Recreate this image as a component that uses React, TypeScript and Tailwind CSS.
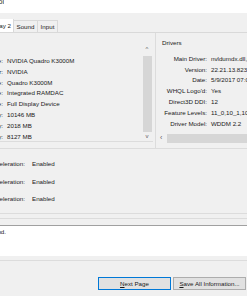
import React from 'react';

const deviceRows = [
  ['Name', 'NVIDIA Quadro K3000M'],
  ['Manufacturer', 'NVIDIA'],
  ['Chip Type', 'Quadro K3000M'],
  ['DAC Type', 'Integrated RAMDAC'],
  ['Device Type', 'Full Display Device'],
  ['Display Memory', '10146 MB'],
  ['Dedicated Memory', '2018 MB'],
  ['Shared Memory', '8127 MB'],
];

const driverRows = [
  ['Main Driver', 'nvldumdx.dll,nvldumdx.dll,nvldumdx.dll,nvldumdx.dll'],
  ['Version', '22.21.13.8233'],
  ['Date', '5/9/2017 07:00:00 PM'],
  ["WHQL Logo'd", 'Yes'],
  ['Direct3D DDI', '12'],
  ['Feature Levels', '11_0,10_1,10_0,9_3,9_2,9_1'],
  ['Driver Model', 'WDDM 2.2'],
];

const features = ['DirectDraw Acceleration', 'Direct3D Acceleration', 'AGP Texture Acceleration'];

export default function App() {
  return (
    <div className="flex h-[296px] w-[247px] flex-col overflow-hidden bg-[#f0f0f0] font-['Liberation_Sans',Arial,sans-serif] text-[6.2px] text-[#1a1a1a]">
      {/* title bar */}
      <div className="h-[13px] bg-white">
        <div className="flex w-[4px] justify-end overflow-hidden">
          <span className="-mt-[3px] whitespace-nowrap text-[7px] leading-[10px]">DirectX Diagnostic Tool</span>
        </div>
      </div>

      {/* tabs */}
      <div className="flex h-[20px] items-end border-b border-[#d9d9d9]">
        <div className="flex h-[13px] w-[14px] items-center justify-end overflow-hidden border-r border-[#d9d9d9] bg-white pr-[2px]">
          <span className="whitespace-nowrap">Display 2</span>
        </div>
        <div className="flex h-[12px] w-[24px] items-center justify-center border-r border-t border-[#d9d9d9]">Sound</div>
        <div className="flex h-[12px] w-[20px] items-center justify-center border-r border-t border-[#d9d9d9]">Input</div>
      </div>

      {/* device + drivers */}
      <div className="flex h-[115px]">
        <div className="flex w-[153px] shrink-0 flex-col pt-[11px]">
          <div className="flex h-[98px] border-b border-[#dcdcdc]">
            <div className="min-w-0 flex-1 pt-[11px]">
              {deviceRows.map(([k, v]) => (
                <div key={k} className="flex h-[10.9px] items-center whitespace-nowrap">
                  <span className="-ml-[57px] w-[60px] shrink-0 text-right">{k}:</span>
                  <span className="ml-[4px]">{v}</span>
                </div>
              ))}
            </div>
            <div className="flex w-[12px] shrink-0 flex-col items-center">
              <div className="flex h-[11px] items-center text-[6px] text-[#606060]">^</div>
              <div className="mt-[1px] h-[76px] w-[9px] bg-[#d6d6d6]" />
              <div className="flex h-[9px] items-center text-[6px] text-[#606060]">v</div>
            </div>
          </div>
        </div>
        <div className="ml-[2px] flex min-w-0 flex-1 flex-col overflow-hidden border-l border-[#dcdcdc] pt-[6px]">
          <div className="pl-[6px] leading-[7px]">Drivers</div>
          <div className="mt-[6px] flex flex-1 flex-col overflow-hidden">
            <div className="flex-1 pl-[3px] pt-[1px]">
              {driverRows.map(([k, v]) => (
                <div key={k} className="flex h-[10.85px] items-center whitespace-nowrap">
                  <span className="w-[48px] shrink-0 text-right">{k}:</span>
                  <span className="ml-[4px]">{v}</span>
                </div>
              ))}
            </div>
            <div className="mb-[5px] flex h-[10px] items-center">
              <span className="w-[11px] shrink-0 pl-[4px] text-[7px] text-[#606060]">‹</span>
              <div className="h-[9px] flex-1 bg-[#d6d6d6]" />
            </div>
          </div>
        </div>
      </div>

      {/* features */}
      <div className="flex h-[66px] flex-col border-b border-t border-[#dcdcdc] pt-[6px]">
        {features.map((f) => (
          <div key={f} className="flex h-[17.5px] items-center whitespace-nowrap">
            <span className="-ml-[60px] w-[85px] shrink-0 text-right">{f}:</span>
            <span className="ml-[7px]">Enabled</span>
          </div>
        ))}
      </div>

      {/* notes */}
      <div className="mt-[4px] flex h-[43px] flex-col border-b border-t border-[#dcdcdc] pb-[4px] pt-[6px]">
        <div className="flex-1 border-t border-[#a0a0a0] bg-white pt-[1px]">
          <div className="flex w-[6px] justify-end overflow-hidden">
            <span className="whitespace-nowrap">No problems found.</span>
          </div>
        </div>
      </div>

      {/* buttons */}
      <div className="flex flex-1 items-start pl-[98px] pt-[16px]">
        <button className="flex h-[13px] w-[73px] items-center justify-center border border-[#0078d7] bg-[#e1e1e1]">
          <span>
            <span className="underline">N</span>ext Page
          </span>
        </button>
        <button className="ml-[2px] flex h-[13px] w-[73px] items-center justify-center border border-[#adadad] bg-[#e1e1e1]">
          <span>
            <span className="underline">S</span>ave All Information...
          </span>
        </button>
      </div>
    </div>
  );
}
